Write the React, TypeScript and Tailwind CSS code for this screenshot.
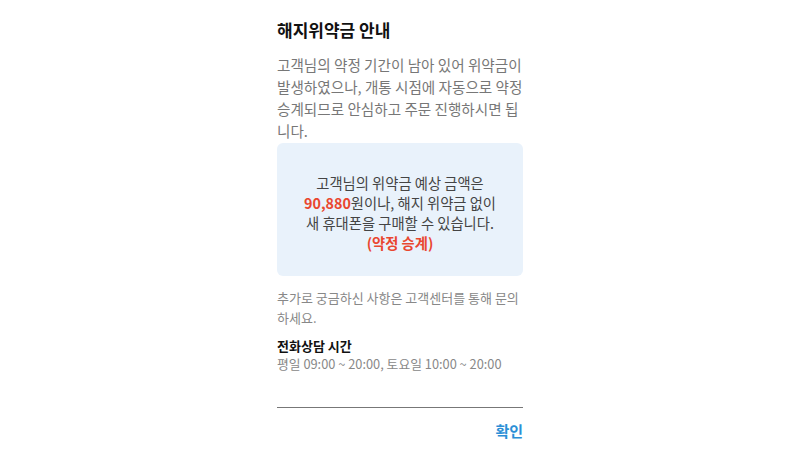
export default function App() {
  return (
    <div
      className="w-[800px] h-[450px] bg-white overflow-hidden flex justify-center"
      style={{ fontFamily: '"Noto Sans CJK KR", "Noto Sans", sans-serif' }}
    >
      <div className="w-[246px] pt-[18px] flex flex-col">
        <h2 className="text-[17px] leading-[24px] font-bold text-[#111]">해지위약금 안내</h2>

        <p className="mt-3 text-[14.6px] leading-[22px] text-[#777]">
          고객님의 약정 기간이 남아 있어 위약금이 발생하였으나, 개통 시점에 자동으로 약정 승계되므로 안심하고 주문 진행하시면 됩니다.
        </p>

        <div className="mt-px h-[133px] rounded-md bg-[#e9f2fb] pt-[30px] text-center text-[14.3px] leading-[20px] text-[#444]">
          고객님의 위약금 예상 금액은
          <br />
          <span className="font-bold text-[#e9472f]">90,880</span>원이나, 해지 위약금 없이
          <br />
          새 휴대폰을 구매할 수 있습니다.
          <br />
          <span className="font-bold text-[#e9472f]">(약정 승계)</span>
        </div>

        <p className="mt-3 text-[13px] leading-[20px] text-[#888]">
          추가로 궁금하신 사항은 고객센터를 통해 문의하세요.
        </p>

        <div className="mt-[9px] text-[13px] leading-[18px] font-bold text-[#111]">전화상담 시간</div>
        <div className="text-[12.8px] leading-[18px] text-[#888]">평일 09:00 ~ 20:00, 토요일 10:00 ~ 20:00</div>

        <div className="mt-[34px] h-px bg-[#777]" />

        <div className="mt-3 flex justify-end">
          <button className="text-[15px] leading-[22px] font-bold text-[#2b8fd6]">확인</button>
        </div>
      </div>
    </div>
  );
}
